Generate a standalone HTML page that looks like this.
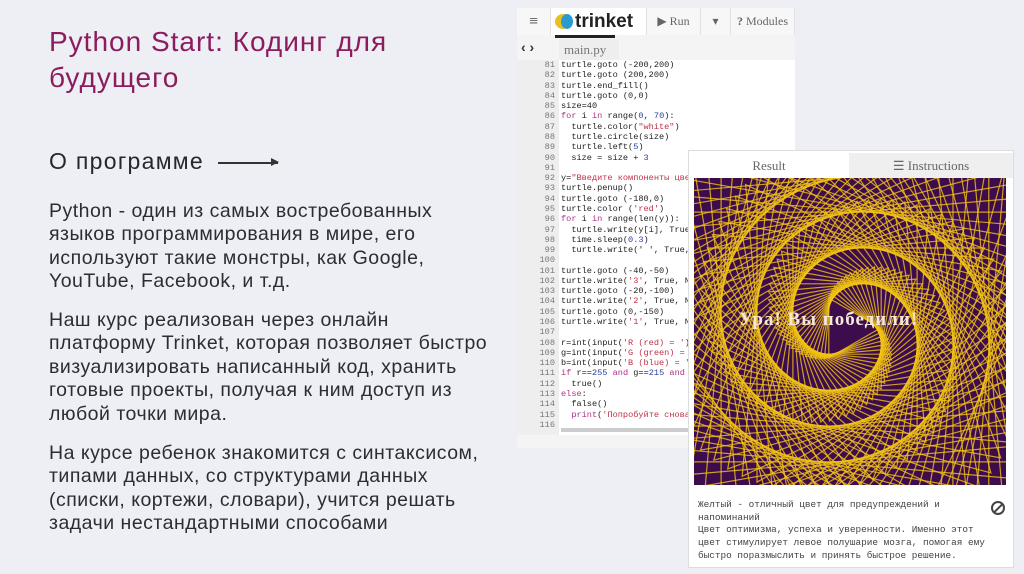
<!DOCTYPE html>
<html><head><meta charset="utf-8"><style>
*{margin:0;padding:0;box-sizing:border-box}
body{width:1024px;height:574px;overflow:hidden;background:#eeeef5;font-family:"Liberation Sans","DejaVu Sans",sans-serif;position:relative}
.t{position:absolute;left:49px;color:#8c1c5e;font-size:28px;letter-spacing:1px;white-space:nowrap}
.p{position:absolute;left:49px;color:#2c2c36;font-size:19.5px;letter-spacing:0.5px;white-space:nowrap}
.h{position:absolute;left:49px;top:148px;color:#26262e;font-size:23px;letter-spacing:1.3px}
#ed{position:absolute;left:517px;top:8px;width:278px;height:440px;background:#f4f4f4}
.tb{position:absolute;top:0;height:27px;background:#f7f7f7;border-right:1px solid #e2e2e2;font-family:"Liberation Serif",serif;color:#666;font-size:12px;line-height:27px;text-align:center}
#code{position:absolute;left:0;top:52px;width:278px;height:375px;background:#fff;font-family:"Liberation Mono",monospace;font-size:8.6px;line-height:10.28px}
#gut{position:absolute;left:0;top:0;width:42px;height:100%;background:#eeeeee;color:#777;text-align:right;padding-right:4px}
#src{position:absolute;left:44px;top:0;white-space:pre;color:#222}
.k{color:#b0308a}.n{color:#2c3c9a}.s{color:#c0304a}
#res{position:absolute;left:688px;top:150px;width:326px;height:418px;background:#fff;border:1px solid #ddd;overflow:hidden}
#out{position:absolute;left:698px;top:499px;font-family:"Liberation Mono",monospace;font-size:9.4px;line-height:12.7px;color:#444;white-space:pre}
</style></head><body>
<div class="t" style="top:26px">Python Start: Кодинг для</div>
<div class="t" style="top:62px">будущего</div>
<div class="h">О программе <span style="display:inline-block;width:60px;height:1.5px;background:#333;vertical-align:middle;position:relative;margin-left:6px"><span style="position:absolute;right:-1px;top:-4px;border-left:8px solid #333;border-top:4.5px solid transparent;border-bottom:4.5px solid transparent"></span></span></div>
<div class="p" style="top:200px">Python - один из самых востребованных</div>
<div class="p" style="top:223px">языков программирования в мире, его</div>
<div class="p" style="top:247px">используют такие монстры, как Google,</div>
<div class="p" style="top:270px">YouTube, Facebook, и т.д.</div>
<div class="p" style="top:309px">Наш курс реализован через онлайн</div>
<div class="p" style="top:332px">платформу Trinket, которая позволяет быстро</div>
<div class="p" style="top:356px">визуализировать написанный код, хранить</div>
<div class="p" style="top:379px">готовые проекты, получая к ним доступ из</div>
<div class="p" style="top:403px">любой точки мира.</div>
<div class="p" style="top:442px">На курсе ребенок знакомится с синтаксисом,</div>
<div class="p" style="top:465px">типами данных, со структурами данных</div>
<div class="p" style="top:489px">(списки, кортежи, словари), учится решать</div>
<div class="p" style="top:512px">задачи нестандартными способами</div>

<div id="ed">
 <div class="tb" style="left:0;width:34px;font-size:16px;color:#444">≡</div>
 <div class="tb" style="left:34px;width:96px;background:#fff;font-family:'Liberation Sans',sans-serif;font-weight:bold;font-size:19px;color:#222;text-align:left;padding-left:24px"><span style="position:absolute;left:4px;top:6px;width:16px;height:15px;border-radius:50%;background:#e8c020"></span><span style="position:absolute;left:10px;top:6px;width:12px;height:15px;border-radius:50%;background:#2a9ad0"></span>trinket<span style="position:absolute;left:4px;bottom:-3px;width:60px;height:3px;background:#222"></span></div>
 <div class="tb" style="left:130px;width:54px">▶ Run</div>
 <div class="tb" style="left:184px;width:30px">▾</div>
 <div class="tb" style="left:214px;width:64px;white-space:nowrap"><b>?</b> Modules</div>
 <div style="position:absolute;left:4px;top:31px;font-size:14px;font-weight:bold;color:#333">‹ ›</div>
 <div style="position:absolute;left:42px;top:31px;width:60px;height:21px;background:#eee;font-family:'Liberation Serif',serif;color:#777;font-size:13px;line-height:21px;padding-left:5px">main.py</div>
 <div id="code"><div id="gut"></div><div id="src"></div>
  <div style="position:absolute;left:44px;bottom:3px;width:230px;height:4px;background:#ccc"></div></div>
</div>

<div id="res">
 <div style="position:absolute;left:0;top:2px;width:160px;height:25px;background:#fff;text-align:center;font-family:'Liberation Serif',serif;color:#666;font-size:13px;line-height:25px">Result</div>
 <div style="position:absolute;left:160px;top:2px;width:164px;height:25px;background:#efefef;text-align:center;font-family:'Liberation Serif',serif;color:#666;font-size:13px;line-height:25px">☰ Instructions</div>
 <svg id="sp" style="position:absolute;left:5px;top:27px" width="312" height="307" viewBox="0 0 312 307"></svg>
 <div style="position:absolute;right:8px;top:350px;width:14px;height:14px;border:2px solid #444;border-radius:50%"><div style="position:absolute;left:4px;top:-1px;width:2px;height:13px;background:#444;transform:rotate(45deg)"></div></div>
</div>
<div id="out">Желтый - отличный цвет для предупреждений и
напоминаний
Цвет оптимизма, успеха и уверенности. Именно этот
цвет стимулирует левое полушарие мозга, помогая ему
быстро поразмыслить и принять быстрое решение.</div>
<script>
var lines=[
'turtle.goto (-200,200)','turtle.goto (200,200)','turtle.end_fill()','turtle.goto (0,0)','size=40',
'<span class=k>for</span> i <span class=k>in</span> range(<span class=n>0</span>, <span class=n>70</span>):',
'  turtle.color(<span class=s>"white"</span>)','  turtle.circle(size)','  turtle.left(<span class=n>5</span>)','  size = size + <span class=n>3</span>','',
'y=<span class=s>"Введите компоненты цвета</span>','turtle.penup()','turtle.goto (-180,0)','turtle.color (<span class=s>\'red\'</span>)',
'<span class=k>for</span> i <span class=k>in</span> range(len(y)):','  turtle.write(y[i], True,','  time.sleep(<span class=n>0.3</span>)','  turtle.write(\' \', True, N','',
'turtle.goto (-40,-50)','turtle.write(<span class=s>\'3\'</span>, True, Nor','turtle.goto (-20,-100)','turtle.write(<span class=s>\'2\'</span>, True, Nor','turtle.goto (0,-150)','turtle.write(<span class=s>\'1\'</span>, True, Nor','',
'r=int(input(<span class=s>\'R (red) = \'</span>))','g=int(input(<span class=s>\'G (green) = \'</span>','b=int(input(<span class=s>\'B (blue) = \'</span>)',
'<span class=k>if</span> r==<span class=n>255</span> <span class=k>and</span> g==<span class=n>215</span> <span class=k>and</span> b','  true()','<span class=k>else</span>:','  false()','  <span class=k>print</span>(<span class=s>\'Попробуйте снова\'</span>)',''];
var g='',s='';for(var i=0;i<lines.length;i++){g+=(81+i)+'<br>';s+=lines[i]+'\n';}
document.getElementById('gut').innerHTML=g;document.getElementById('src').innerHTML=s;
var sv='<rect width="312" height="307" fill="#3c0c4c"/>';
var cx=152,cy=150;
for(var k=0;k<90;k++){var sz=30+2.6*k;var a=k*5*Math.PI/180;var r=sz*1.15;var pts=[];
 for(var j=0;j<3;j++){var t=a+j*2*Math.PI/3;pts.push((cx+r*Math.cos(t)).toFixed(1)+','+(cy+r*Math.sin(t)).toFixed(1));}
 sv+='<polygon points="'+pts.join(' ')+'" fill="none" stroke="#f2c414" stroke-width="1.2" opacity="0.8"/>';}
sv+='<text x="45" y="147" font-family="Liberation Serif,serif" font-size="19" font-weight="bold" fill="#f4e8d8" letter-spacing="1">Ура! Вы победили!</text>';
document.getElementById('sp').innerHTML=sv;
</script>
</body></html>
